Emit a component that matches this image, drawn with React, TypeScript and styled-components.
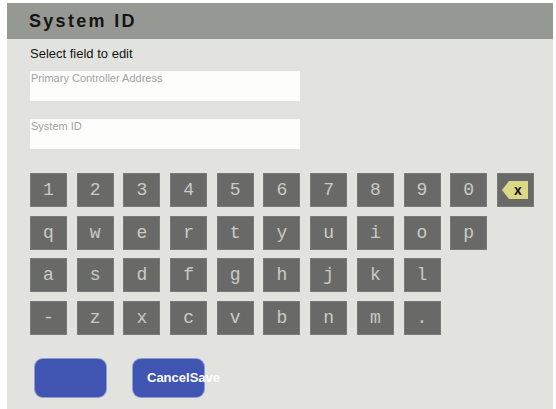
import React from 'react'
import styled, { createGlobalStyle } from 'styled-components'

const GlobalStyle = createGlobalStyle`
  html, body {
    margin: 0;
    padding: 0;
    background: #fff;
  }
  body {
    font-family: "Liberation Sans", Arial, sans-serif;
  }
`

const Page = styled.div`
  width: 556px;
  height: 409px;
  padding: 3px 3px 0 7px;
  box-sizing: border-box;
  overflow: hidden;
`

const Panel = styled.div`
  height: 100%;
  background: #e2e3de;
  display: flex;
  flex-direction: column;
`

const Header = styled.div`
  height: 36px;
  background: #969893;
  display: flex;
  align-items: center;
  padding-left: 22px;
  font-weight: bold;
  font-size: 18px;
  letter-spacing: 2.3px;
  color: #141414;
`

const Body = styled.div`
  padding: 0 23px;
  display: flex;
  flex-direction: column;
`

const Hint = styled.div`
  margin-top: 7px;
  font-size: 13px;
  color: #141414;
  line-height: 16px;
`

const Field = styled.div<{ $gap: number }>`
  margin-top: ${p => p.$gap}px;
  width: 270px;
  height: 30px;
  background: #fdfdfc;
  box-sizing: border-box;
  padding: 1px 1px;
  font-size: 11px;
  line-height: 13px;
  color: #a2a3a0;
`

const Keyboard = styled.div`
  margin-top: 24px;
  display: flex;
  flex-direction: column;
  gap: 8.5px;
`

const Row = styled.div`
  display: flex;
  gap: 9.7px;
`

const Key = styled.div`
  flex-shrink: 0;
  width: 37px;
  height: 34px;
  background: #696a67;
  box-shadow: inset 0 0 0 1px #797a77;
  display: flex;
  align-items: center;
  justify-content: center;
  font-family: "Liberation Mono", "Courier New", monospace;
  font-size: 18px;
  color: #c9cac5;
`

const Actions = styled.div`
  margin-top: 24px;
  padding-left: 5px;
  display: flex;
  gap: 27px;
`

const Button = styled.div`
  width: 71px;
  height: 38px;
  border-radius: 8px;
  background: #3f55b1;
  box-shadow: 0 0 0 1px #8f9bd4;
  display: flex;
  align-items: center;
  padding-left: 14px;
  box-sizing: border-box;
  color: #fff;
  font-weight: bold;
  font-size: 13px;
  white-space: nowrap;
  overflow: visible;
`

const rows = [
  ['1', '2', '3', '4', '5', '6', '7', '8', '9', '0'],
  ['q', 'w', 'e', 'r', 't', 'y', 'u', 'i', 'o', 'p'],
  ['a', 's', 'd', 'f', 'g', 'h', 'j', 'k', 'l'],
  ['-', 'z', 'x', 'c', 'v', 'b', 'n', 'm', '.'],
]

const BackspaceIcon = () => (
  <svg width="28" height="22" viewBox="0 0 28 22">
    <path d="M1 11 L8 2 H27 V20 H8 Z" fill="#dcd986" />
    <text
      x="17"
      y="16"
      textAnchor="middle"
      fontFamily="Liberation Sans, Arial, sans-serif"
      fontWeight="bold"
      fontSize="14"
      fill="#111"
    >
      x
    </text>
  </svg>
)

export default function App() {
  return (
    <>
      <GlobalStyle />
      <Page>
        <Panel>
          <Header>System ID</Header>
          <Body>
            <Hint>Select field to edit</Hint>
            <Field $gap={9}>Primary Controller Address</Field>
            <Field $gap={18}>System ID</Field>
            <Keyboard>
              {rows.map((row, i) => (
                <Row key={i}>
                  {row.map(k => (
                    <Key key={k}>{k}</Key>
                  ))}
                  {i === 0 && (
                    <Key>
                      <BackspaceIcon />
                    </Key>
                  )}
                </Row>
              ))}
            </Keyboard>
            <Actions>
              <Button />
              <Button>CancelSave</Button>
            </Actions>
          </Body>
        </Panel>
      </Page>
    </>
  )
}
